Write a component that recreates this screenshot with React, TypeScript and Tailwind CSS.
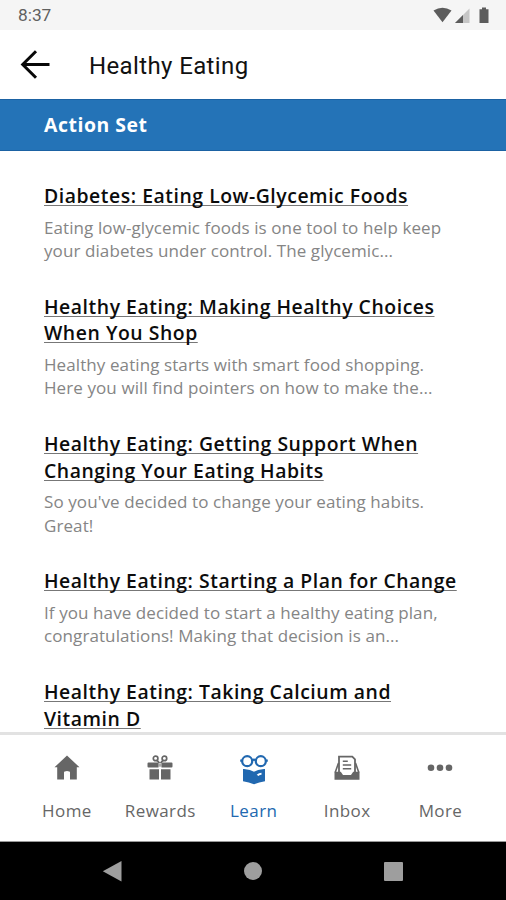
import React from "react";

type Article = { title: string[]; body: string[] };

const articles: Article[] = [
  {
    title: ["Diabetes: Eating Low-Glycemic Foods"],
    body: ["Eating low-glycemic foods is one tool to help keep", "your diabetes under control. The glycemic..."],
  },
  {
    title: ["Healthy Eating: Making Healthy Choices", "When You Shop"],
    body: ["Healthy eating starts with smart food shopping.", "Here you will find pointers on how to make the..."],
  },
  {
    title: ["Healthy Eating: Getting Support When", "Changing Your Eating Habits"],
    body: ["So you've decided to change your eating habits.", "Great!"],
  },
  {
    title: ["Healthy Eating: Starting a Plan for Change"],
    body: ["If you have decided to start a healthy eating plan,", "congratulations! Making that decision is an..."],
  },
  {
    title: ["Healthy Eating: Taking Calcium and", "Vitamin D"],
    body: [],
  },
];

function StatusBar() {
  return (
    <div className="flex h-[30px] shrink-0 items-center justify-between bg-[#f5f5f5] pl-[18px] pr-4">
      <span className="font-['Roboto',sans-serif] text-[17.300px] leading-[30px] text-[#606060]">8:37</span>
      <svg width="57" height="18" viewBox="0 0 57 18" fill="#5c5c5c">
        <path d="M0.5 4.6Q9.5-1.2 18.500 4.6L9.500 16.2Z" />
        <path d="M36.500 2.500V17H22Z" fill="#c6c6c6" />
        <path d="M30 9V17H22Z" />
        <path d="M49 1.500h4v1.700h2.500V17h-9V3.200H49Z" />
      </svg>
    </div>
  );
}

function AppBar() {
  return (
    <header className="flex h-[69px] shrink-0 items-center bg-white pl-5">
      <svg width="31" height="30" viewBox="0 0 31 30" fill="none" stroke="#080808" strokeWidth="3">
        <path d="M29.500 14.500H3M16 1.200 2.700 14.500 16 27.800" />
      </svg>
      <h1 className="ml-[38px] whitespace-nowrap pt-[2px] font-['Roboto',sans-serif] text-[24px] tracking-[0.38px] text-[#111]">Healthy Eating</h1>
    </header>
  );
}

function ArticleItem({ title, body }: Article) {
  return (
    <article className="mb-[31px] whitespace-nowrap">
      <h2 className="text-[19.400px] font-semibold leading-[26.700px] tracking-[0.540px] text-[#0c0c0c]">
        {title.map((line) => (
          <span key={line} className="block">
            <span className="underline decoration-[#777] decoration-1 underline-offset-[2px] [text-decoration-skip-ink:none]">{line}</span>
          </span>
        ))}
      </h2>
      <p className="mt-[6px] pb-[0.500px] text-[17px] leading-[23.200px] tracking-[0.090px] text-[#858585]">
        {body.map((line) => (
          <span key={line} className="block">{line}</span>
        ))}
      </p>
    </article>
  );
}

const icons = {
  home: (
    <path d="M13 0.500 0.500 12.300H3.200V24.500H10V17.500Q10 16 13 16T16 17.500V24.500H22.800V12.300H25.500Z" />
  ),
  gift: (
    <>
      <g fill="none" stroke="currentColor" strokeWidth="1.700">
        <circle cx="8.600" cy="3.400" r="2.300" />
        <circle cx="17.400" cy="3.400" r="2.300" />
        <path d="M10 5.300 12.500 8M16 5.300 13.500 8" />
      </g>
      <path d="M1.500 7.500H11.500V12.500H1.500Q.5 12.500.5 11.500V8.500Q.5 7.500 1.500 7.500ZM14.500 7.500h10q1 0 1 1v3q0 1-1 1h-10ZM2.500 14.200H12V24.500H2.500ZM14 14.200h9.500V24.500H14Z" />
      <path d="M11.500 8.500h3v3.200h-3Z" opacity=".55" />
    </>
  ),
  learn: (
    <>
      <g fill="none" stroke="currentColor" strokeWidth="2.200">
        <circle cx="6.200" cy="6.200" r="5" />
        <circle cx="19.800" cy="6.200" r="5" />
        <path d="M11 5.400q2-1.400 4 0M1.500 5.600H-.8M24.500 5.600H26.800" />
      </g>
      <path d="M2 14Q3.500 13.700 4.500 14.200Q9 14.600 13 16.700Q17 14.600 21.500 14.200Q23 13.700 24 14V26.200Q18 27 13 29.300Q8 27 2 26.200Z" />
      <path d="M15.700 19.800Q18 17.900 20.500 17.700V19.700Q18.700 19.800 17.500 21Z" fill="white" />
    </>
  ),
  inbox: (
    <>
      <path d="M5 17V1.600H18.300L21 4.300V17" fill="none" stroke="currentColor" strokeWidth="1.800" />
      <path d="M8.800 6.200h5M8.800 10h8.400M8.800 13.800h8.400" fill="none" stroke="currentColor" strokeWidth="1.500" />
      <path d="M4.500 8 1.200 17.500M21.500 8 24.800 17.500" fill="none" stroke="currentColor" strokeWidth="1.600" />
      <path d="M.5 16.800H6.800L9 20H17L19.200 16.800H25.500V24.700H.5Z" />
    </>
  ),
  more: (
    <>
      <circle cx="4" cy="12.700" r="3.300" />
      <circle cx="13" cy="12.700" r="3.300" />
      <circle cx="22" cy="12.700" r="3.300" />
    </>
  ),
};

const tabs: { label: string; icon: keyof typeof icons; active?: boolean }[] = [
  { label: "Home", icon: "home" },
  { label: "Rewards", icon: "gift" },
  { label: "Learn", icon: "learn", active: true },
  { label: "Inbox", icon: "inbox" },
  { label: "More", icon: "more" },
];

function TabBar() {
  return (
    <nav className="flex h-[110px] shrink-0 justify-center border-b border-t-[3px] border-b-[#999] border-t-[#e2e2e2] bg-white pl-[1.400px] pt-5">
      {tabs.map(({ label, icon, active }) => (
        <div key={label} className={`flex w-[93.400px] flex-col items-center ${active ? "text-[#2168b0]" : "text-[#666]"}`}>
          <svg width="26" height="30" viewBox="0 0 26 30" fill="currentColor" className="overflow-visible">
            {icons[icon]}
          </svg>
          <span className="mt-[14px] text-[17px] font-medium leading-6 tracking-[0.400px]">{label}</span>
        </div>
      ))}
    </nav>
  );
}

function SystemNav() {
  return (
    <div className="flex h-[58px] shrink-0 items-center justify-between bg-black pl-[102px] pr-[103px]">
      <svg width="20" height="22" viewBox="0 0 20 22" fill="#9e9e9e"><path d="M19.500 1V21.500L.8 11.200Z" /></svg>
      <div className="size-[18px] rounded-full bg-[#9e9e9e]" />
      <div className="size-[19px] rounded-[1px] bg-[#9e9e9e]" />
    </div>
  );
}

export default function App() {
  return (
    <div className="flex h-[900px] w-[506px] flex-col overflow-hidden bg-white font-['Open_Sans',sans-serif]">
      <StatusBar />
      <AppBar />
      <div className="h-[52px] shrink-0 border-y border-[#1b62a3] bg-[#2473b7] pl-11 text-[19.400px] font-bold leading-[50px] tracking-[0.550px] text-white">Action Set</div>
      <main className="min-h-0 flex-1 overflow-hidden pl-11 pt-[32px]">
        {articles.map((a) => (
          <ArticleItem key={a.title[0]} {...a} />
        ))}
      </main>
      <TabBar />
      <SystemNav />
    </div>
  );
}
